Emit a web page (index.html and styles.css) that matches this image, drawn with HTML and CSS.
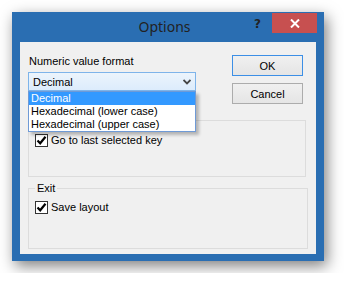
FILE: index.html
```html
<!DOCTYPE html>
<html lang="en">
<head>
    <meta charset="UTF-8">
    <meta name="viewport" content="width=device-width, initial-scale=1.0">
    <title>Options</title>
    <link rel="stylesheet" href="styles.css">
</head>
<body>
    <div class="window">
        <!-- Title bar -->
        <div class="titlebar">
            <span></span>
            <span class="title">Options</span>
            <div class="caption-buttons">
                <span class="help">?</span>
                <span class="close">
                    <svg width="10" height="9" viewBox="0 0 10 9">
                        <path d="M1 0.5 L9 8.5 M9 0.5 L1 8.5" stroke="#fff" stroke-width="2"/>
                    </svg>
                </span>
            </div>
        </div>

        <div class="client">
            <div class="top">
                <div class="field">
                    <div class="label">Numeric value format</div>
                    <div class="combo">
                        <span>Decimal</span>
                        <svg width="8" height="6" viewBox="0 0 8 6">
                            <path d="M0.5 1 L4 4.5 L7.5 1" fill="none" stroke="#444" stroke-width="1.8"/>
                        </svg>
                    </div>
                    <ul class="dropdown">
                        <li class="selected">Decimal</li>
                        <li>Hexadecimal (lower case)</li>
                        <li>Hexadecimal (upper case)</li>
                    </ul>
                </div>
                <div class="buttons">
                    <button class="btn default">OK</button>
                    <button class="btn">Cancel</button>
                </div>
            </div>

            <!-- legend of this group is hidden behind the open list -->
            <fieldset class="group group-start">
                <label class="check">
                    <span class="box">
                        <svg width="11" height="11" viewBox="0 0 11 11">
                            <path d="M1.5 5.5 L4.2 8.3 L9.5 1.8" fill="none" stroke="#000" stroke-width="2.2"/>
                        </svg>
                    </span>
                    Go to last selected key
                </label>
            </fieldset>

            <fieldset class="group group-exit">
                <legend>Exit</legend>
                <label class="check">
                    <span class="box">
                        <svg width="11" height="11" viewBox="0 0 11 11">
                            <path d="M1.5 5.5 L4.2 8.3 L9.5 1.8" fill="none" stroke="#000" stroke-width="2.2"/>
                        </svg>
                    </span>
                    Save layout
                </label>
            </fieldset>
        </div>
    </div>
</body>
</html>
```

FILE: styles.css
```css
body {
    margin: 0;
    padding: 12px;
    background-color: #fff;
    font-family: "Liberation Sans", Arial, sans-serif;
    font-size: 11px;
    color: #000;
}
.window {
    width: 312px;
    height: 249px;
    display: flex;
    flex-direction: column;
    background-color: #2a6eb2;
    box-shadow: 3px 5px 14px rgba(0, 0, 0, 0.5);
}
.titlebar {
    height: 30px;
    display: grid;
    grid-template-columns: 1fr auto 1fr;
    padding: 0 7px 0 0;
}
.title {
    font-family: "Noto Sans", sans-serif;
    font-size: 14px;
    line-height: 30px;
    color: #222;
}
.caption-buttons {
    display: flex;
    justify-content: flex-end;
    align-items: flex-start;
    gap: 11px;
}
.help {
    font-family: "DejaVu Sans", sans-serif;
    font-weight: bold;
    font-size: 12px;
    line-height: 12px;
    margin-top: 6px;
    color: #222;
}
.close {
    width: 45px;
    height: 20px;
    margin-top: 1px;
    background-color: #c75050;
    display: flex;
    align-items: center;
    justify-content: center;
}
.client {
    flex: 1;
    margin: 0 8px 7px 8px;
    background-color: #f0f0f0;
}
.top {
    display: flex;
    justify-content: space-between;
    padding: 13px 13px 0 8px;
}
.field {
    position: relative;
}
.label {
    line-height: 13px;
    margin: 0 0 4px 1px;
}
.combo {
    width: 168px;
    height: 19px;
    box-sizing: border-box;
    border: 1px solid #7eb4ea;
    background: linear-gradient(#ecf4fc, #dcecfc);
    display: flex;
    align-items: center;
    justify-content: space-between;
    padding: 0 4px 0 4px;
}
.dropdown {
    position: absolute;
    left: 0;
    top: 36px;
    width: 168px;
    box-sizing: border-box;
    margin: 0;
    padding: 0;
    list-style: none;
    background-color: #fff;
    border: 1px solid #6f9ad6;
    box-shadow: 3px 3px 3px rgba(0, 0, 0, 0.25);
    z-index: 2;
}
.dropdown li {
    height: 13px;
    line-height: 13px;
    padding-left: 2px;
    white-space: nowrap;
}
.dropdown li.selected {
    background-color: #3399ff;
    color: #fff;
}
.buttons {
    display: flex;
    flex-direction: column;
    gap: 7px;
}
.btn {
    width: 71px;
    height: 21px;
    border: 1px solid #acacac;
    background: linear-gradient(#f0f0f0, #e5e5e5);
    font-family: "Liberation Sans", Arial, sans-serif;
    font-size: 11px;
    color: #000;
    padding: 0;
}
.btn.default {
    border-color: #3c8fe6;
}
.group {
    border: 1px solid #dcdcdc;
    margin: 0;
    min-inline-size: 0;
}
.group legend {
    padding: 0 2px;
    line-height: 13px;
}
.group-start {
    margin: 16px 10px 0 8px;
    padding: 13px 6px 29px 6px;
}
.group-exit {
    margin: 5px 8px 0 8px;
    padding: 6px 6px 34px 6px;
}
.check {
    display: flex;
    align-items: center;
    gap: 3px;
    line-height: 13px;
}
.box {
    width: 13px;
    height: 13px;
    box-sizing: border-box;
    border: 1px solid #333;
    background-color: #fff;
    display: flex;
    align-items: center;
    justify-content: center;
}
```
